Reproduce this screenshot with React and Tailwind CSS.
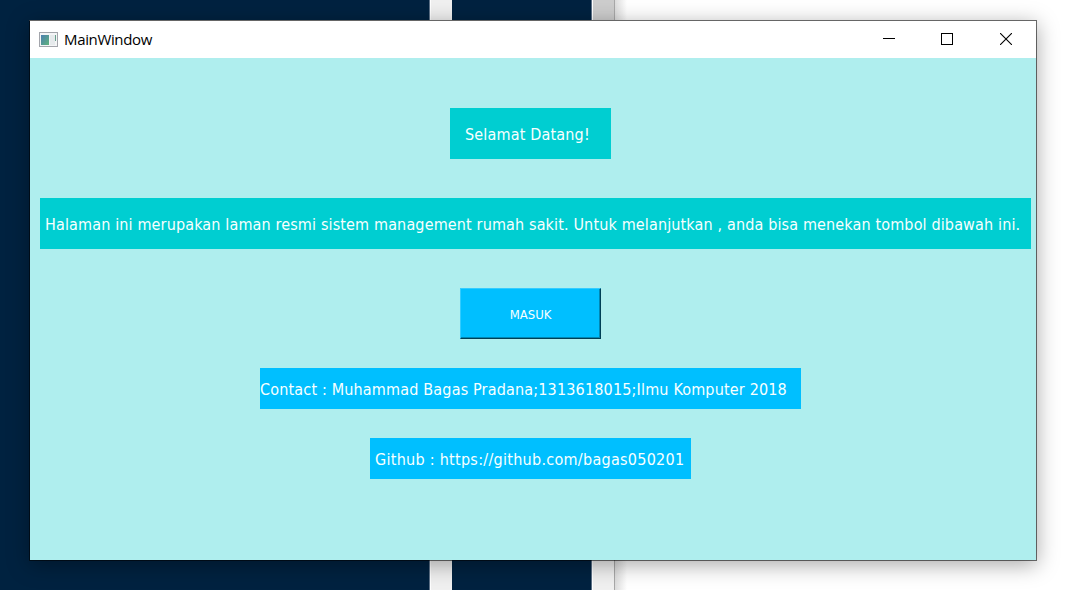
function Backdrop() {
  return (
    <div className="flex h-full w-full bg-white">
      <div className="w-[429px] bg-[#002240]" />
      <div className="w-px bg-[#5d7187]" />
      <div className="w-[22px] border-l border-white bg-[#f0f0f0]" />
      <div className="w-[139px] bg-[#002240]" />
      <div className="w-px bg-[#5d7187]" />
      <div className="flex w-[22px] flex-col border-l border-white">
        <div className="h-[40px] bg-[#cdcdcd]" />
        <div className="grow bg-[#f0f0f0]" />
      </div>
      <div className="w-px bg-[#a8a8a8]" />
      <div className="w-3 bg-linear-to-r from-[#dcdcdc] to-white" />
    </div>
  );
}

function AppIcon() {
  return (
    <svg width="19" height="15" viewBox="0 0 19 15" className="mt-px shrink-0">
      <defs>
        <linearGradient id="pane" x1="0" y1="0" x2="1" y2="1">
          <stop offset="0" stopColor="#4c7fb0" />
          <stop offset="1" stopColor="#5fb37c" />
        </linearGradient>
      </defs>
      <rect x="0.5" y="0.5" width="18" height="14" fill="#f4f5f6" stroke="#a3a5ab" />
      <rect x="2" y="3" width="8" height="10" fill="url(#pane)" />
      <rect x="11" y="3" width="5" height="10" fill="#e6eaec" />
      <rect x="16" y="3" width="1" height="6" fill="#68a08c" />
    </svg>
  );
}

function TitleBar() {
  return (
    <div className="flex h-[37px] items-center bg-white pb-px pl-[9px]">
      <AppIcon />
      <span className="ml-[6px] font-['Open_Sans',sans-serif] text-[15px] leading-5 tracking-[-0.35px] text-black">
        MainWindow
      </span>
      <div className="ml-auto flex">
        <div className="flex w-[58px] justify-center">
          <svg width="12" height="12" shapeRendering="crispEdges"><path d="M0 5.5H12" stroke="#000" /></svg>
        </div>
        <div className="flex w-[58px] justify-center">
          <svg width="12" height="12" shapeRendering="crispEdges"><rect x=".5" y=".5" width="11" height="11" fill="none" stroke="#000" /></svg>
        </div>
        <div className="flex w-[60px] justify-center">
          <svg width="12" height="12"><path d="M0 0L12 12M12 0L0 12" stroke="#000" strokeWidth="1.1" /></svg>
        </div>
      </div>
    </div>
  );
}

export default function App() {
  return (
    <div className="relative h-[590px] w-[1074px] overflow-hidden">
      <Backdrop />
      <div className="absolute top-[20px] left-[29px] flex h-[541px] w-[1008px] flex-col border border-black/55 border-t-[#666] bg-[#afeeee] bg-clip-padding shadow-[0_4px_20px_rgba(0,0,0,0.34)]">
        <TitleBar />
        <div className="flex grow flex-col items-center pt-[50px] pr-[5px] font-['DejaVu_Sans_Condensed','DejaVu_Sans',sans-serif] text-[16px] whitespace-nowrap text-[#f8ffff]">
          <div className="flex h-[51px] w-[161px] items-center bg-[#00ced1] pt-[2px] pl-[15px]">
            <span className="tracking-[0.17px]">Selamat Datang!</span>
          </div>
          <div className="mt-[39px] ml-[10px] flex h-[51px] w-[991px] items-center bg-[#00ced1] pt-[2px] pl-[5px]">
            <span className="tracking-[0.143px]">
              Halaman ini merupakan laman resmi sistem management rumah sakit. Untuk melanjutkan , anda bisa menekan tombol dibawah ini.
            </span>
          </div>
          <button className="mt-[39px] h-[51px] w-[141px] border border-t-[#33ccff] border-r-[#003f55] border-b-[#003f55] border-l-[#33ccff] bg-[#00bfff] pt-[2px] text-[13px] shadow-[inset_-1px_-1px_0_#0086b3]">
            MASUK
          </button>
          <div className="mt-[29px] flex h-[41px] w-[541px] items-center bg-[#00bfff] pt-[2px]">
            <span className="tracking-[0.17px]">Contact : Muhammad Bagas Pradana;1313618015;Ilmu Komputer 2018</span>
          </div>
          <div className="mt-[29px] flex h-[41px] w-[321px] items-center bg-[#00bfff] pt-[2px] pl-[5px]">
            <span className="tracking-[0.28px]">Github : https://github.com/bagas050201</span>
          </div>
        </div>
      </div>
    </div>
  );
}
